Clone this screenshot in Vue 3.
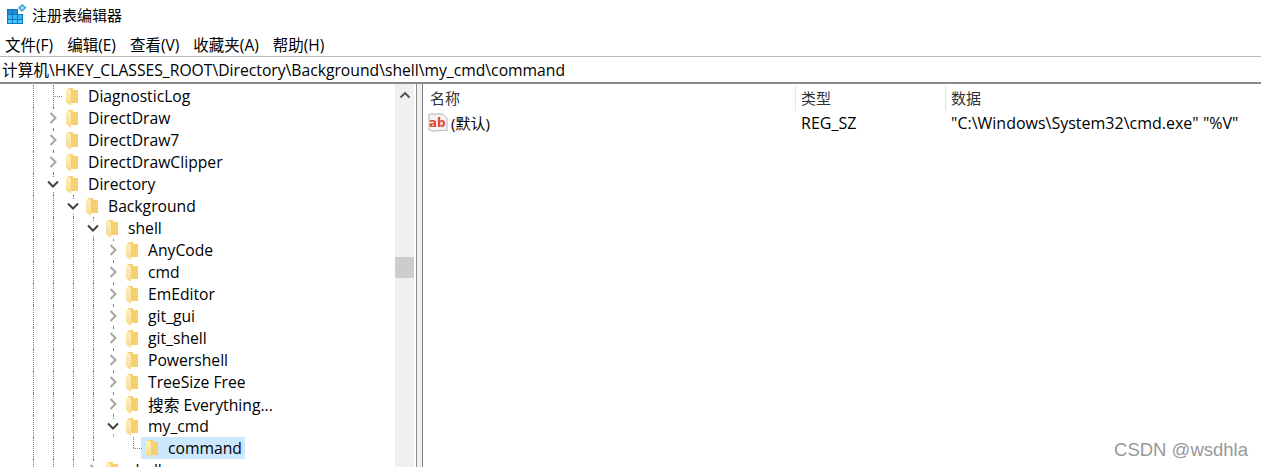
<template>
  <div class="regedit">
    <div class="titlebar">
      <svg class="app-icon" width="20" height="20" viewBox="0 0 20 20">
        <rect x="0" y="5" width="16" height="15" fill="#0f78c4" />
        <g fill="#35b4ee">
          <rect x="1" y="6" width="4" height="4" fill="#1c8ad6" />
          <rect x="6" y="6" width="4" height="4" fill="#1c8ad6" />
          <rect x="1" y="11" width="4" height="4" />
          <rect x="6" y="11" width="4" height="4" />
          <rect x="11" y="11" width="4" height="4" />
          <rect x="1" y="16" width="4" height="3" fill="#4cc6f5" />
          <rect x="6" y="16" width="4" height="3" fill="#4cc6f5" />
          <rect x="11" y="16" width="4" height="3" fill="#4cc6f5" />
        </g>
        <rect x="11" y="5" width="5" height="5" fill="#ffffff" />
        <polygon points="15,0 19.5,3.5 15,8 11,4" fill="#3d9fd8" />
        <polygon points="15,2 17.5,3.8 15,6 13,4" fill="#a6dcf5" />
      </svg>
      <span>注册表编辑器</span>
    </div>

    <div class="menubar">
      <span v-for="m in menus" :key="m">{{ m }}</span>
    </div>

    <div class="address">计算机\HKEY_CLASSES_ROOT\Directory\Background\shell\my_cmd\command</div>

    <div class="panes">
      <div class="tree-pane">
        <div class="tree">
          <div v-for="row in rows" :key="row.label + row.guides.length" class="row">
            <span
              v-for="(g, i) in row.guides"
              :key="i"
              class="cell"
              :class="{ guide: g.on }"
            ></span>
            <span class="cell toggle" :class="row.kind">
              <svg v-if="row.kind === 'closed'" width="8" height="12" viewBox="0 0 8 12">
                <path d="M1.5 1 L6.500 6 L1.5 11" fill="none" stroke="#a6a6a6" stroke-width="2" />
              </svg>
              <svg v-else-if="row.kind === 'open'" width="12" height="8" viewBox="0 0 12 8">
                <path d="M1 1.500 L6 6.500 L11 1.500" fill="none" stroke="#404040" stroke-width="2" />
              </svg>
            </span>
            <span class="item" :class="{ selected: row.selected }">
              <svg class="folder" width="12" height="18" viewBox="0 0 12 18">
                <defs>
                  <linearGradient id="flap" x1="0" y1="0" x2="0" y2="1">
                    <stop offset="0" stop-color="#fdf0bf" />
                    <stop offset="1" stop-color="#f7d98a" />
                  </linearGradient>
                </defs>
                <polygon points="2,0 7,0 7,2 12,2 12,15 2,15" fill="#f6cf6f" />
                <polygon points="0,1 4,1 5,4 5,18 1,15 0,14" fill="url(#flap)" />
              </svg>
              <span class="label">{{ row.label }}</span>
            </span>
          </div>
        </div>
        <div class="scrollbar">
          <svg class="scroll-up" width="12" height="8" viewBox="0 0 12 8">
            <path d="M1.5 6.5 L6 2 L10.5 6.5" fill="none" stroke="#505050" stroke-width="1.8" />
          </svg>
          <div class="thumb"></div>
        </div>
      </div>

      <div class="splitter"></div>

      <div class="list-pane">
        <div class="list-head">
          <span class="col-name">名称</span>
          <span class="col-type">类型</span>
          <span class="col-data">数据</span>
        </div>
        <div class="list-row">
          <span class="col-name value-name">
            <svg class="ab-icon" width="20" height="20" viewBox="0 0 20 20">
              <path d="M1 1 H15 L19 5 V18 C14 15.500 8 20 1 17 Z" fill="#f4f4f4" stroke="#b4b4b4" />
              <text x="1" y="14" class="ab-text">ab</text>
            </svg>
            (默认)
          </span>
          <span class="col-type">REG_SZ</span>
          <span class="col-data">"C:\Windows\System32\cmd.exe" "%V"</span>
        </div>
      </div>
    </div>

    <div class="watermark">CSDN @wsdhla</div>
  </div>
</template>

<script setup>
const menus = ['文件(F)', '编辑(E)', '查看(V)', '收藏夹(A)', '帮助(H)']

// depth 0 is the Directory level; each guide cell is one dotted vertical line
const makeRow = (label, depth, kind, extra = {}) => {
  const off = extra.off || []
  const guides = []
  for (let i = 0; i <= depth; i++) {
    guides.push({ on: !off.includes(i) })
  }
  return { label, kind, guides, selected: !!extra.selected }
}

const rows = [
  makeRow('DiagnosticLog', 0, 'leaf'),
  makeRow('DirectDraw', 0, 'closed'),
  makeRow('DirectDraw7', 0, 'closed'),
  makeRow('DirectDrawClipper', 0, 'closed'),
  makeRow('Directory', 0, 'open'),
  makeRow('Background', 1, 'open'),
  makeRow('shell', 2, 'open'),
  makeRow('AnyCode', 3, 'closed'),
  makeRow('cmd', 3, 'closed'),
  makeRow('EmEditor', 3, 'closed'),
  makeRow('git_gui', 3, 'closed'),
  makeRow('git_shell', 3, 'closed'),
  makeRow('Powershell', 3, 'closed'),
  makeRow('TreeSize Free', 3, 'closed'),
  makeRow('搜索 Everything...', 3, 'closed'),
  makeRow('my_cmd', 3, 'open'),
  makeRow('command', 4, 'last', { off: [4], selected: true }),
  makeRow('shellex', 2, 'closed')
]
</script>

<style>
html,
body {
  margin: 0;
  background: #fff;
}
</style>

<style scoped>
.regedit {
  position: relative;
  width: 1261px;
  height: 467px;
  overflow: hidden;
  display: flex;
  flex-direction: column;
  background: #fff;
  color: #000;
  font-family: "Open Sans", "Noto Sans CJK SC", sans-serif;
  font-size: 16px;
}

.titlebar {
  height: 28px;
  display: flex;
  align-items: center;
  gap: 5px;
  padding-left: 7px;
  box-sizing: border-box;
  font-family: "Noto Sans CJK SC", sans-serif;
  font-size: 15px;
}

.menubar {
  height: 29px;
  display: flex;
  align-items: center;
  gap: 14px;
  padding: 5px 0 0 5px;
  box-sizing: border-box;
  font-size: 15.5px;
  border-bottom: 1px solid #b8b8b8;
}

.address {
  height: 27px;
  line-height: 26px;
  padding-left: 2px;
  box-sizing: border-box;
  white-space: nowrap;
  font-size: 15.7px;
  border-bottom: 2px solid #8a8a8a;
}

.panes {
  flex: 1;
  min-height: 0;
  display: flex;
}

.tree-pane {
  width: 414px;
  display: flex;
  flex-shrink: 0;
}

.tree {
  width: 395px;
  padding: 1px 0 0 23px;
  box-sizing: border-box;
  overflow: hidden;
  font-size: 15.7px;
}

.row {
  height: 22px;
  display: flex;
  align-items: stretch;
}

.cell {
  position: relative;
  width: 20px;
  flex-shrink: 0;
}

.guide::before,
.toggle::before {
  content: "";
  position: absolute;
  left: 10px;
  top: 0;
  bottom: 0;
  border-left: 1px dotted #808080;
}

.toggle svg {
  position: absolute;
  left: 50%;
  top: 50%;
  transform: translate(-50%, -50%);
  padding: 3px 2px;
  background: #fff;
}

.toggle.leaf::after,
.toggle.last::after {
  content: "";
  position: absolute;
  left: 10px;
  top: 11px;
  width: 9px;
  border-top: 1px dotted #808080;
}

.toggle.last::before {
  bottom: 11px;
}

.item {
  display: flex;
  align-items: center;
  height: 22px;
  padding: 0 3px 0 5px;
  margin-left: -2px;
}

.item.selected {
  background: #cce8ff;
}

.folder {
  flex-shrink: 0;
  margin-top: 1px;
}

.label {
  margin-left: 10px;
  white-space: nowrap;
}

.scrollbar {
  position: relative;
  width: 19px;
  background: #f0f0f0;
}

.scroll-up {
  display: block;
  margin: 7px auto 0;
}

.thumb {
  height: 21px;
  margin-top: 158px;
  background: #cdcdcd;
}

.splitter {
  width: 7px;
  margin-left: 2px;
  box-sizing: border-box;
  background: #f0f0f0;
  border-left: 1px solid #8c8c8c;
  border-right: 1px solid #80808f;
}

.list-pane {
  flex: 1;
  min-width: 0;
}

.list-head,
.list-row {
  display: flex;
}

.list-head {
  height: 26px;
  margin-top: 1px;
  color: #333;
  font-size: 15px;
  line-height: 27px;
}

.list-row {
  height: 24px;
  line-height: 24px;
}

.col-name {
  width: 372px;
  padding-left: 7px;
  box-sizing: border-box;
}

.col-type {
  width: 150px;
  padding-left: 6px;
  box-sizing: border-box;
}

.col-data {
  padding-left: 6px;
  white-space: nowrap;
}

.list-head .col-type,
.list-head .col-data {
  border-left: 1px solid #e5e5e5;
  padding-left: 5px;
}

.value-name {
  display: flex;
  align-items: center;
  gap: 3px;
  padding-left: 5px;
  font-size: 15px;
}

.ab-icon {
  flex-shrink: 0;
}

.ab-text {
  font-family: "DejaVu Sans", sans-serif;
  font-size: 12px;
  font-weight: 700;
  fill: #e2492f;
}

.watermark {
  position: absolute;
  right: 13px;
  bottom: 6px;
  color: #999;
  font-family: "Liberation Sans", sans-serif;
  font-size: 18.5px;
}
</style>
